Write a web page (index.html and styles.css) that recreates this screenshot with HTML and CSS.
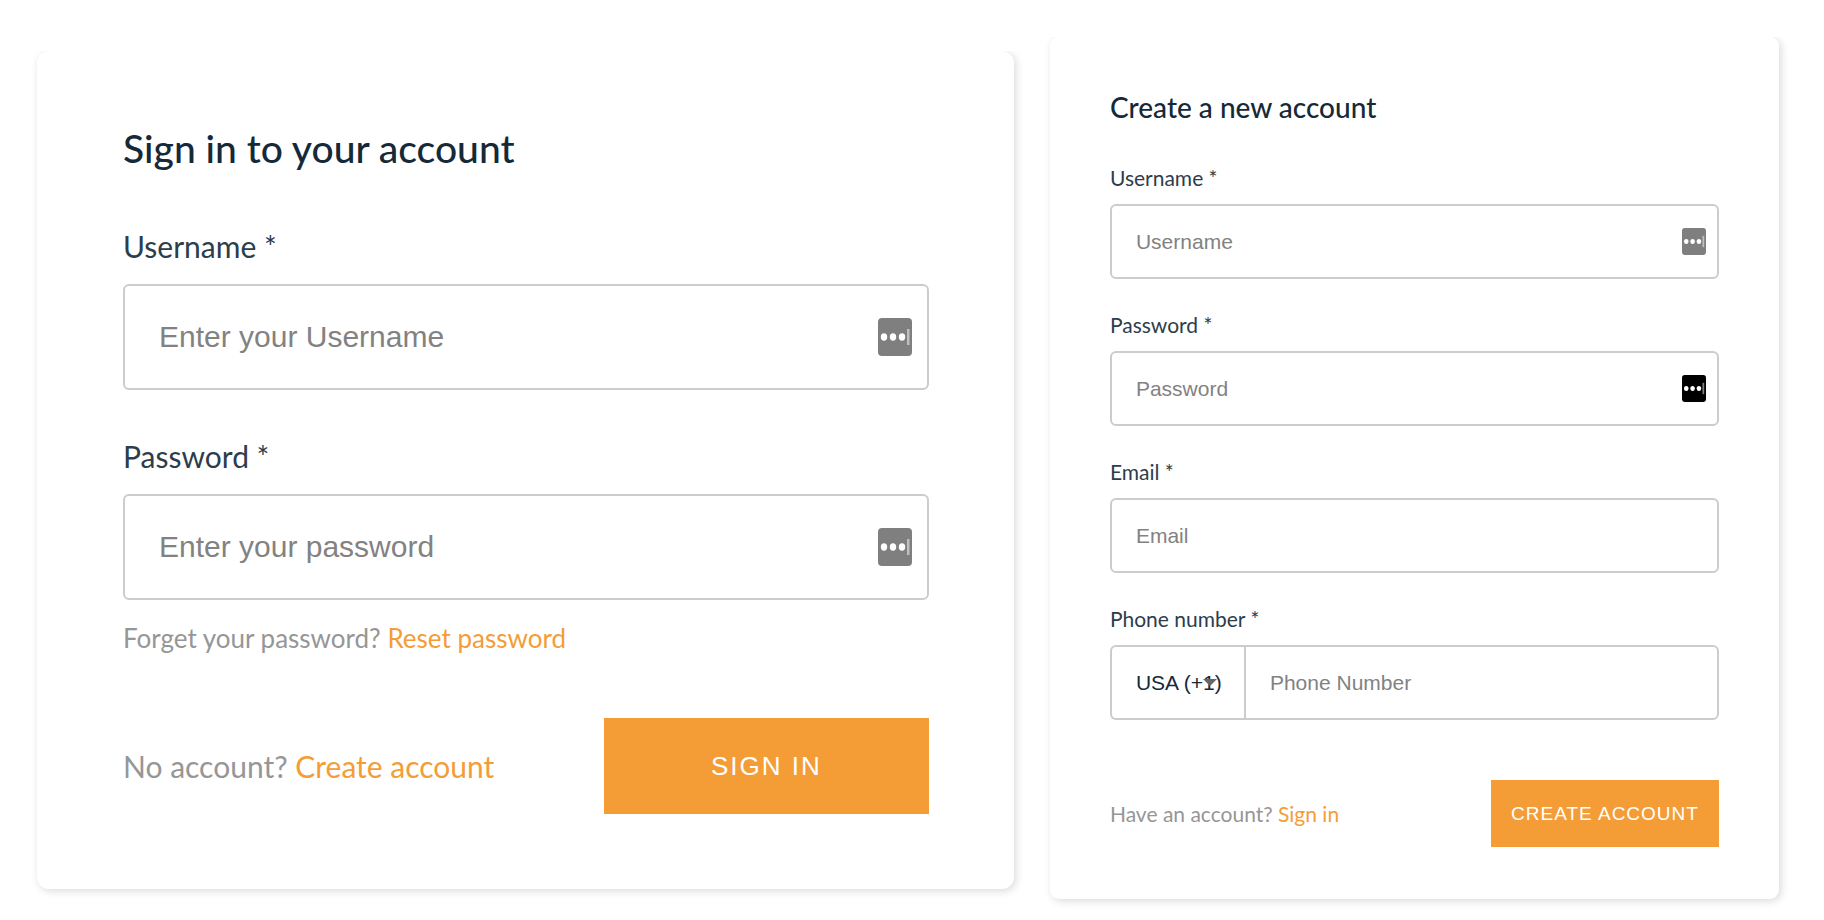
FILE: index.html
```html
<!DOCTYPE html>
<html lang="en">
<head>
    <meta charset="UTF-8">
    <title>Sign in / Create account</title>
    <link rel="stylesheet" href="styles.css">
</head>
<body>

<!-- password manager icon -->
<svg class="defs" width="0" height="0" aria-hidden="true">
    <symbol id="pw-icon" viewBox="0 0 34 38">
        <rect width="34" height="38" rx="4" fill="currentColor"/>
        <ellipse cx="6" cy="19" rx="3.2" ry="3.7" fill="#fff"/>
        <ellipse cx="15" cy="19" rx="3.2" ry="3.7" fill="#fff"/>
        <ellipse cx="24" cy="19" rx="3.2" ry="3.7" fill="#fff"/>
        <rect x="29" y="11" width="2.5" height="16" fill="#fff" opacity="0.5"/>
    </symbol>
</svg>

<main class="page">
    <form class="card signin">
        <h1 class="title">Sign in to your account</h1>

        <div class="field">
            <label class="label" for="signin-username">Username *</label>
            <div class="control">
                <input class="input" id="signin-username" type="text" placeholder="Enter your Username">
                <svg class="pw-icon"><use href="#pw-icon"/></svg>
            </div>
        </div>

        <div class="field">
            <label class="label" for="signin-password">Password *</label>
            <div class="control">
                <input class="input" id="signin-password" type="password" placeholder="Enter your password">
                <svg class="pw-icon"><use href="#pw-icon"/></svg>
            </div>
            <p class="hint">Forget your password? <a class="link" href="#">Reset password</a></p>
        </div>

        <div class="footer">
            <p class="switch">No account? <a class="link" href="#">Create account</a></p>
            <button class="button" type="button">SIGN IN</button>
        </div>
    </form>

    <form class="card signup">
        <h1 class="title">Create a new account</h1>

        <div class="field">
            <label class="label" for="username">Username *</label>
            <div class="control">
                <input class="input" id="username" type="text" placeholder="Username">
                <svg class="pw-icon"><use href="#pw-icon"/></svg>
            </div>
        </div>

        <div class="field">
            <label class="label" for="password">Password *</label>
            <div class="control">
                <input class="input" id="password" type="password" placeholder="Password">
                <svg class="pw-icon pw-icon-dark"><use href="#pw-icon"/></svg>
            </div>
        </div>

        <div class="field">
            <label class="label" for="email">Email *</label>
            <div class="control">
                <input class="input" id="email" type="email" placeholder="Email">
            </div>
        </div>

        <div class="field">
            <label class="label" for="phone">Phone number *</label>
            <div class="control phone">
                <div class="country">
                    <select class="input select" aria-label="Country code">
                        <option>USA (+1)</option>
                    </select>
                    <svg class="arrow" viewBox="0 0 14 7"><path d="M0 0h14L7 7z" fill="#666"/></svg>
                </div>
                <input class="input phone-input" id="phone" type="tel" placeholder="Phone Number">
            </div>
        </div>

        <div class="footer">
            <p class="switch">Have an account? <a class="link" href="#">Sign in</a></p>
            <button class="button" type="button">CREATE ACCOUNT</button>
        </div>
    </form>
</main>

</body>
</html>
```

FILE: styles.css
```css
* {
    box-sizing: border-box;
}
body {
    margin: 0;
    background-color: #fff;
    color: #152939;
    font-family: Lato, sans-serif;
}
h1, p {
    margin: 0;
}
.defs {
    position: absolute;
}
.page {
    display: grid;
    grid-template-columns: 67fr 50fr;
    align-items: start;
    gap: 36px;
    padding: 37px 45px 20px 37px;
}
.card {
    background-color: #fff;
    border-radius: 12px;
    box-shadow: 2px 2px 8px rgba(0, 0, 0, 0.15);
    /* no shadow above the card */
    clip-path: inset(0 -20px -20px -20px);
}
.title {
    font-weight: 500;
}
.label {
    display: block;
    color: #2c3d4c;
}
.control {
    position: relative;
}
.input {
    display: block;
    width: 100%;
    border: 2px solid #ccc;
    border-radius: 6px;
    background-color: #fff;
    color: #152939;
    font-family: "Liberation Sans", Arial, sans-serif;
}
.input::placeholder {
    color: #828282;
    opacity: 1;
}
.pw-icon {
    position: absolute;
    top: 0;
    bottom: 0;
    margin: auto 0;
    color: #7f7f7f;
}
.pw-icon-dark {
    color: #000;
}
.hint, .switch {
    color: #969696;
}
.link {
    color: #f49d37;
    text-decoration: none;
}
.footer {
    display: flex;
    justify-content: space-between;
    align-items: center;
}
.button {
    border: none;
    background-color: #f49d37;
    color: #fff;
    font-family: "Liberation Sans", Arial, sans-serif;
    cursor: pointer;
}

/* sign in */
.signin {
    margin-top: 14px;
    padding: 71px 85px 75px 86px;
}
.signin .title {
    margin-bottom: 51px;
    font-size: 39px;
    line-height: 52px;
}
.signin .field {
    margin-bottom: 45px;
}
.signin .label {
    margin-bottom: 17px;
    font-size: 30px;
    line-height: 42px;
}
.signin .input {
    height: 106px;
    padding: 0 34px;
    font-size: 30px;
}
.signin .pw-icon {
    right: 17px;
    width: 34px;
    height: 38px;
}
.signin .hint {
    margin-top: 20px;
    font-size: 26px;
    line-height: 36px;
}
.signin .footer {
    margin-top: 62px;
}
.signin .switch {
    font-size: 30px;
}
.signin .button {
    width: 325px;
    height: 96px;
    font-size: 26px;
    letter-spacing: 2px;
}

/* create account */
.signup {
    padding: 51px 60px 52px;
    border-radius: 9px;
}
.signup .title {
    margin-bottom: 37px;
    font-size: 28px;
    line-height: 38px;
}
.signup .field {
    margin-bottom: 31px;
}
.signup .label {
    margin-bottom: 11px;
    font-size: 21px;
    line-height: 30px;
}
.signup .input {
    height: 75px;
    padding: 0 24px;
    font-size: 21px;
}
.signup .pw-icon {
    right: 13px;
    width: 24px;
    height: 27px;
}
.phone {
    display: flex;
}
.country {
    position: relative;
    flex: none;
    width: 134px;
}
.signup .select {
    padding: 0 0 0 24px;
    border-right: none;
    border-radius: 6px 0 0 6px;
    appearance: none;
}
.signup .phone-input {
    border-radius: 0 6px 6px 0;
}
.arrow {
    position: absolute;
    top: 34px;
    right: 27px;
    width: 14px;
    height: 7px;
    pointer-events: none;
}
.signup .footer {
    margin-top: 60px;
}
.signup .switch {
    font-size: 21px;
}
.signup .button {
    width: 228px;
    height: 67px;
    font-size: 19px;
    letter-spacing: 1px;
}
```
